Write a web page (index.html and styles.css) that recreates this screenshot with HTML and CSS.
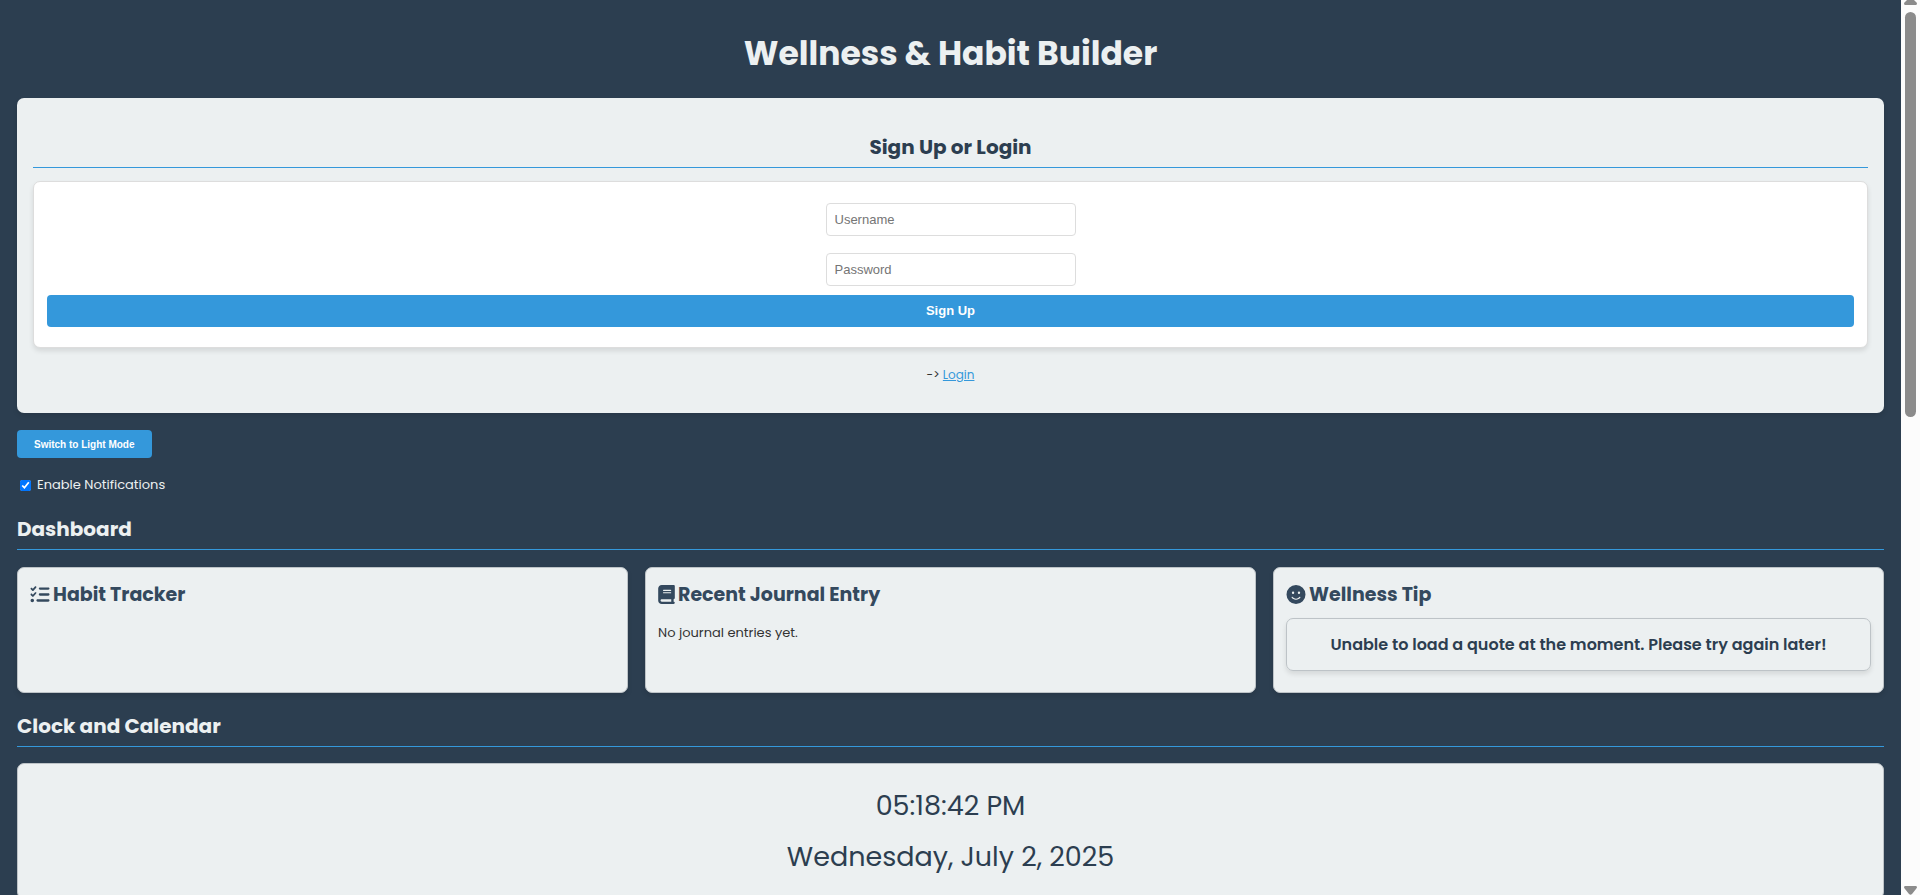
FILE: index.html
```html
<!DOCTYPE html>
<html lang="en">
<head>
<meta charset="utf-8">
<meta name="viewport" content="width=device-width, initial-scale=1">
<title>Wellness &amp; Habit Builder</title>
<link rel="stylesheet" href="styles.css">
</head>
<body>
<div class="shell">
  <main class="page">
    <h1 class="title">Wellness &amp; Habit Builder</h1>

    <section class="auth">
      <h2 class="section-title auth-title">Sign Up or Login</h2>
      <form class="auth-form">
        <input class="field" type="text" placeholder="Username" aria-label="Username">
        <input class="field" type="password" placeholder="Password" aria-label="Password">
        <button class="button submit" type="button">Sign Up</button>
      </form>
      <p class="auth-switch">-&gt; <a class="link" href="#login">Login</a></p>
    </section>

    <button class="button theme-toggle" type="button">Switch to Light Mode</button>

    <label class="notify" for="notifications">
      <input class="notify-box" id="notifications" type="checkbox" checked>
      Enable Notifications
    </label>

    <section class="block">
      <h2 class="section-title">Dashboard</h2>
      <div class="cards">
        <article class="card">
          <h3 class="card-title">
            <svg class="icon" viewBox="0 0 512 512" aria-hidden="true"><path d="M152.1 38.2c9.900 8.900 10.700 24 1.800 33.900l-72 80c-4.400 4.900-10.600 7.800-17.200 7.900s-12.900-2.400-17.600-7L7 113C-2.300 103.600-2.300 88.400 7 79s24.600-9.400 33.900 0l22.100 22.100 55.100-61.200c8.900-9.900 24-10.700 33.900-1.800zm0 160c9.900 8.900 10.700 24 1.800 33.900l-72 80c-4.400 4.900-10.600 7.800-17.200 7.900s-12.900-2.400-17.600-7L7 273c-9.400-9.400-9.400-24.600 0-33.900s24.600-9.400 33.900 0l22.100 22.100 55.100-61.200c8.900-9.900 24-10.700 33.900-1.800zM224 96c0-17.700 14.300-32 32-32h224c17.700 0 32 14.300 32 32s-14.300 32-32 32H256c-17.700 0-32-14.300-32-32zm0 160c0-17.700 14.300-32 32-32h224c17.700 0 32 14.300 32 32s-14.300 32-32 32H256c-17.700 0-32-14.300-32-32zM160 416c0-17.700 14.300-32 32-32h288c17.700 0 32 14.300 32 32s-14.300 32-32 32H192c-17.700 0-32-14.300-32-32zM48 368a48 48 0 1 1 0 96 48 48 0 1 1 0-96z"/></svg>
            Habit Tracker
          </h3>
        </article>
        <article class="card">
          <h3 class="card-title">
            <svg class="icon icon-book" viewBox="0 0 448 512" aria-hidden="true"><path d="M96 0C43 0 0 43 0 96v320c0 53 43 96 96 96h320c17.700 0 32-14.300 32-32s-14.300-32-32-32v-64c17.700 0 32-14.300 32-32V32c0-17.700-14.300-32-32-32H96zm0 384h256v64H96c-17.700 0-32-14.300-32-32s14.300-32 32-32zm32-240c0-8.800 7.200-16 16-16h192c8.800 0 16 7.200 16 16s-7.200 16-16 16H144c-8.800 0-16-7.200-16-16zm16 48h192c8.800 0 16 7.200 16 16s-7.200 16-16 16H144c-8.800 0-16-7.200-16-16s7.200-16 16-16z"/></svg>
            Recent Journal Entry
          </h3>
          <p class="card-text">No journal entries yet.</p>
        </article>
        <article class="card">
          <h3 class="card-title">
            <svg class="icon" viewBox="0 0 512 512" aria-hidden="true"><path d="M256 512A256 256 0 1 0 256 0a256 256 0 1 0 0 512zM164.100 325.500C182 346.200 212.600 368 256 368s74-21.800 91.900-42.500c5.800-6.700 15.900-7.400 22.600-1.600s7.400 15.900 1.600 22.600C349.800 372.100 311.100 400 256 400s-93.800-27.900-116.100-53.500c-5.800-6.700-5.100-16.800 1.600-22.600s16.800-5.100 22.600 1.600zM144.400 208a32 32 0 1 1 64 0 32 32 0 1 1-64 0zm192-32a32 32 0 1 1 0 64 32 32 0 1 1 0-64z"/></svg>
            Wellness Tip
          </h3>
          <p class="quote">Unable to load a quote at the moment. Please try again later!</p>
        </article>
      </div>
    </section>

    <section class="block">
      <h2 class="section-title">Clock and Calendar</h2>
      <div class="clock">
        <p class="clock-line">05:18:42 PM</p>
        <p class="clock-line">Wednesday, July 2, 2025</p>
      </div>
    </section>
  </main>
  <div class="scrollbar" aria-hidden="true">
    <svg class="arrow" viewBox="0 0 13 5"><path d="M3 0h7l3 3q0 2-1 2H1q-1 0-1-2z"/></svg>
    <div class="track"><div class="thumb"></div></div>
    <svg class="arrow arrow-down" viewBox="0 0 13 9"><path d="M1 0h11q2 1 0 3L8 8q-1.500 1.500-3 0L1 3q-2-2 0-3z"/></svg>
  </div>
</div>
</body>
</html>
```
FILE: styles.css
```css
* {
  box-sizing: border-box;
}

body {
  margin: 0;
  background: #2c3e50;
  color: #ecf0f1;
  font-family: Poppins, Inter, "Open Sans", sans-serif;
  font-size: 13px;
  line-height: 22px;
}

h1, h2, h3, p {
  margin: 0;
}

.shell {
  display: grid;
  grid-template-columns: minmax(0, 1fr) 19px;
  height: 100vh;
}

.page {
  display: flex;
  flex-direction: column;
  align-items: stretch;
  overflow: hidden;
  padding: 27px 17px 0;
}

.title {
  margin-bottom: 17px;
  text-align: center;
  font-size: 33px;
  font-weight: 700;
  line-height: 54px;
}

.auth {
  flex: none;
  padding: 32px 16px 27px;
  border-radius: 7px;
  background: #ecf0f1;
  box-shadow: 0 3px 5px rgba(0, 0, 0, 0.1);
  color: #333;
  text-align: center;
}

.section-title {
  padding-bottom: 3px;
  border-bottom: 1px solid #3498db;
  font-size: 20px;
  font-weight: 700;
  line-height: 34px;
}

.auth-title {
  margin-bottom: 13px;
  color: #2c3e50;
}

.auth-form {
  display: flex;
  flex-direction: column;
  align-items: center;
  padding: 21px 13px 20px;
  border: 1px solid #ddd;
  border-radius: 7px;
  background: #fff;
  box-shadow: 0 3px 5px rgba(0, 0, 0, 0.1);
}

.field {
  width: 250px;
  height: 33px;
  margin-bottom: 17px;
  padding: 0 8px;
  border: 1px solid #ddd;
  border-radius: 4px;
  font: 13px "Liberation Sans", Arial, sans-serif;
}

.field::placeholder {
  color: #757575;
}

.field + .field {
  margin-bottom: 9px;
}

.button {
  border: 0;
  border-radius: 4px;
  background: #3498db;
  color: #fff;
  font-family: "Liberation Sans", Arial, sans-serif;
  font-weight: 700;
}

.submit {
  width: 100%;
  height: 32px;
  padding: 0 0 2px;
  font-size: 13px;
}

.auth-switch {
  margin-top: 16px;
  font-size: 12px;
}

.link {
  color: #3498db;
}

.theme-toggle {
  align-self: flex-start;
  flex: none;
  height: 28px;
  margin: 17px 0 16px;
  padding: 0 17px;
  font-size: 10px;
}

.notify {
  display: flex;
  align-items: center;
  align-self: flex-start;
  gap: 6px;
}

.notify-box {
  width: 11px;
  height: 11px;
  margin: 0 0 0 3px;
  accent-color: #0075ff;
}

.block {
  flex: none;
  margin-top: 16px;
}

.cards {
  display: grid;
  grid-template-columns: repeat(3, minmax(0, 1fr));
  gap: 17px;
  margin-top: 17px;
}

.card {
  min-height: 126px;
  padding: 12px;
  border: 1px solid #bdc3c7;
  border-radius: 7px;
  background: #ecf0f1;
  box-shadow: 0 3px 5px rgba(0, 0, 0, 0.1);
  color: #333;
}

.card-title {
  display: flex;
  align-items: center;
  gap: 3px;
  color: #34495e;
  font-size: 19px;
  line-height: 29px;
}

.icon {
  width: 20px;
  height: 19px;
  flex: none;
  fill: currentColor;
}

.icon-book {
  width: 17px;
}

.card-text {
  margin-top: 13px;
}

.quote {
  margin-top: 9px;
  padding: 13px;
  border: 1px solid #bdc3c7;
  border-radius: 7px;
  box-shadow: 0 3px 5px rgba(0, 0, 0, 0.1);
  color: #2c3e50;
  text-align: center;
  font-size: 16px;
  font-weight: 600;
  line-height: 25px;
}

.clock {
  display: grid;
  gap: 8px;
  margin-top: 16px;
  padding: 20px 13px;
  border: 1px solid #bdc3c7;
  border-radius: 7px;
  background: #ecf0f1;
  color: #2c3e50;
  text-align: center;
}

.clock-line {
  font-size: 27px;
  line-height: 43px;
}

.scrollbar {
  display: flex;
  flex-direction: column;
  align-items: center;
  background: #fcfcfc;
}

.arrow {
  width: 13px;
  height: 5px;
  fill: #8b8b8b;
}

.arrow-down {
  height: 9px;
}

.track {
  flex: 1;
  padding: 7px 0 0;
}

.thumb {
  width: 11px;
  height: 46.3%;
  border-radius: 6px;
  background: #8b8b8b;
}
```
